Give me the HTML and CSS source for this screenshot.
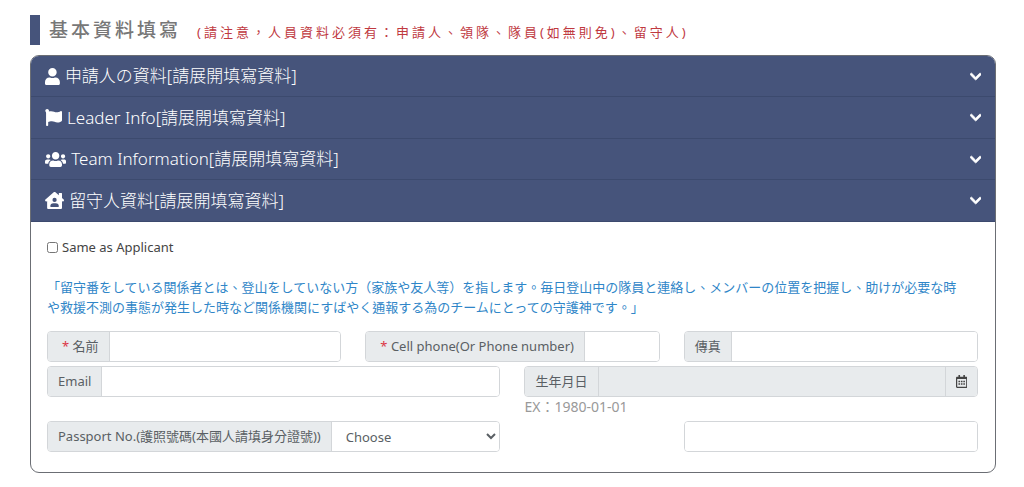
FILE: index.html
```html
<!DOCTYPE html>
<html lang="zh-Hant">

<head>
    <meta charset="UTF-8">
    <meta name="viewport" content="width=device-width, initial-scale=1.0">
    <title>基本資料填寫</title>
    <link rel="stylesheet" href="styles.css">
</head>

<body>
    <div class="title">
        <h1>基本資料填寫</h1>
        <span class="notice">(請注意，人員資料必須有：申請人、領隊、隊員(如無則免)、留守人)</span>
    </div>

    <div class="card">
        <button type="button" class="card-header">
            <svg class="icon" viewBox="0 0 448 512"><path d="M224 256c70.7 0 128-57.3 128-128S294.7 0 224 0 96 57.3 96 128s57.3 128 128 128zm89.6 32h-16.7c-22.2 10.2-46.9 16-72.9 16s-50.6-5.8-72.9-16h-16.7C60.2 288 0 348.2 0 422.4V464c0 26.5 21.5 48 48 48h352c26.5 0 48-21.5 48-48v-41.6c0-74.2-60.2-134.4-134.4-134.4z"/></svg>
            <span>申請人の資料[請展開填寫資料]</span>
            <svg class="arrow" viewBox="0 0 448 512"><path d="M207.029 381.476L12.686 187.132c-9.373-9.373-9.373-24.569 0-33.941l22.667-22.667c9.357-9.357 24.522-9.375 33.901-.04L224 284.505l154.745-154.021c9.379-9.335 24.544-9.317 33.901.04l22.667 22.667c9.373 9.373 9.373 24.569 0 33.941L240.971 381.476c-9.373 9.372-24.569 9.372-33.942 0z"/></svg>
        </button>
        <button type="button" class="card-header">
            <svg class="icon" viewBox="0 0 512 512"><path d="M349.565 98.783C295.978 98.783 251.721 64 184.348 64c-24.955 0-47.309 4.384-68.045 12.013a55.947 55.947 0 0 0 3.586-23.562C118.117 24.015 94.806 1.206 66.338.048 34.345-1.254 8 24.296 8 56c0 19.026 9.497 35.825 24 45.945V488c0 13.255 10.745 24 24 24h16c13.255 0 24-10.745 24-24v-94.4c28.311-12.064 63.582-22.122 114.435-22.122 53.588 0 97.844 34.783 165.217 34.783 48.169 0 86.667-16.294 122.505-40.858C506.84 359.452 512 349.571 512 339.045v-243.1c0-23.393-24.269-38.87-45.485-29.016-34.338 15.948-76.454 31.854-116.95 31.854z"/></svg>
            <span>Leader Info[請展開填寫資料]</span>
            <svg class="arrow" viewBox="0 0 448 512"><path d="M207.029 381.476L12.686 187.132c-9.373-9.373-9.373-24.569 0-33.941l22.667-22.667c9.357-9.357 24.522-9.375 33.901-.04L224 284.505l154.745-154.021c9.379-9.335 24.544-9.317 33.901.04l22.667 22.667c9.373 9.373 9.373 24.569 0 33.941L240.971 381.476c-9.373 9.372-24.569 9.372-33.942 0z"/></svg>
        </button>
        <button type="button" class="card-header">
            <svg class="icon" viewBox="0 0 640 512"><path d="M96 224c35.3 0 64-28.7 64-64s-28.7-64-64-64-64 28.7-64 64 28.7 64 64 64zm448 0c35.3 0 64-28.7 64-64s-28.7-64-64-64-64 28.7-64 64 28.7 64 64 64zm32 32h-64c-17.6 0-33.5 7.1-45.1 18.6 40.3 22.1 68.9 62 75.1 109.4h66c17.7 0 32-14.3 32-32v-32c0-35.3-28.7-64-64-64zm-256 0c61.9 0 112-50.1 112-112S381.9 32 320 32 208 82.1 208 144s50.1 112 112 112zm76.8 32h-8.3c-20.8 10-43.9 16-68.5 16s-47.6-6-68.5-16h-8.3C179.6 288 128 339.6 128 403.2V432c0 26.5 21.5 48 48 48h288c26.5 0 48-21.5 48-48v-28.8c0-63.6-51.6-115.2-115.2-115.2zm-223.7-13.4C161.5 263.1 145.6 256 128 256H64c-35.3 0-64 28.7-64 64v32c0 17.7 14.3 32 32 32h65.9c6.3-47.4 34.9-87.3 75.2-109.4z"/></svg>
            <span>Team Information[請展開填寫資料]</span>
            <svg class="arrow" viewBox="0 0 448 512"><path d="M207.029 381.476L12.686 187.132c-9.373-9.373-9.373-24.569 0-33.941l22.667-22.667c9.357-9.357 24.522-9.375 33.901-.04L224 284.505l154.745-154.021c9.379-9.335 24.544-9.317 33.901.04l22.667 22.667c9.373 9.373 9.373 24.569 0 33.941L240.971 381.476c-9.373 9.372-24.569 9.372-33.942 0z"/></svg>
        </button>
        <button type="button" class="card-header">
            <svg class="icon" viewBox="0 0 576 512"><path d="M570.69,236.27,512,184.44V48a16,16,0,0,0-16-16H432a16,16,0,0,0-16,16V99.67L314.78,10.3C308.5,4.61,296.53,0,288,0s-20.46,4.61-26.74,10.3l-256,226A18.27,18.27,0,0,0,0,248.2a18.64,18.64,0,0,0,4.09,10.71L25.5,282.7a21.14,21.14,0,0,0,12,5.3,21.67,21.67,0,0,0,10.69-4.11l15.9-14V480a32,32,0,0,0,32,32H480a32,32,0,0,0,32-32V269.88l15.91,14A21.94,21.94,0,0,0,538.63,288a20.89,20.89,0,0,0,11.87-5.31l21.41-23.81A21.64,21.64,0,0,0,576,248.19,21,21,0,0,0,570.69,236.27ZM288,176a64,64,0,1,1-64,64A64,64,0,0,1,288,176ZM400,448H176a16,16,0,0,1-16-16,96,96,0,0,1,96-96h64a96,96,0,0,1,96,96A16,16,0,0,1,400,448Z"/></svg>
            <span>留守人資料[請展開填寫資料]</span>
            <svg class="arrow" viewBox="0 0 448 512"><path d="M207.029 381.476L12.686 187.132c-9.373-9.373-9.373-24.569 0-33.941l22.667-22.667c9.357-9.357 24.522-9.375 33.901-.04L224 284.505l154.745-154.021c9.379-9.335 24.544-9.317 33.901.04l22.667 22.667c9.373 9.373 9.373 24.569 0 33.941L240.971 381.476c-9.373 9.372-24.569 9.372-33.942 0z"/></svg>
        </button>

        <form class="card-body">
            <div class="check">
                <input type="checkbox" id="same">
                <label for="same">Same as Applicant</label>
            </div>

            <p class="info">「留守番をしている関係者とは、登山をしていない方（家族や友人等）を指します。毎日登山中の隊員と連絡し、メンバーの位置を把握し、助けが必要な時や救援不測の事態が発生した時など関係機関にすばやく通報する為のチームにとっての守護神です。」</p>

            <div class="row">
                <div class="input-group col-4">
                    <label for="name"><span class="required">*</span> 名前</label>
                    <input type="text" id="name">
                </div>
                <div class="input-group col-4">
                    <label for="phone"><span class="required">*</span> Cell phone(Or Phone number)</label>
                    <input type="text" id="phone">
                </div>
                <div class="input-group col-4">
                    <label for="fax">傳真</label>
                    <input type="text" id="fax">
                </div>

                <div class="input-group col-6">
                    <label for="email">Email</label>
                    <input type="text" id="email">
                </div>
                <div class="col-6">
                    <div class="input-group">
                        <label for="birthday">生年月日</label>
                        <input type="text" id="birthday" readonly>
                        <button type="button" class="btn-date" aria-label="生年月日">
                            <svg viewBox="0 0 448 512"><path d="M148 288h-40c-6.6 0-12-5.4-12-12v-40c0-6.6 5.4-12 12-12h40c6.6 0 12 5.4 12 12v40c0 6.6-5.4 12-12 12zm108-12v-40c0-6.6-5.4-12-12-12h-40c-6.6 0-12 5.4-12 12v40c0 6.6 5.4 12 12 12h40c6.6 0 12-5.4 12-12zm96 0v-40c0-6.6-5.4-12-12-12h-40c-6.6 0-12 5.4-12 12v40c0 6.6 5.4 12 12 12h40c6.6 0 12-5.4 12-12zm-96 96v-40c0-6.6-5.4-12-12-12h-40c-6.6 0-12 5.4-12 12v40c0 6.6 5.4 12 12 12h40c6.6 0 12-5.4 12-12zm-96 0v-40c0-6.6-5.4-12-12-12h-40c-6.6 0-12 5.4-12 12v40c0 6.6 5.4 12 12 12h40c6.6 0 12-5.4 12-12zm192 0v-40c0-6.6-5.4-12-12-12h-40c-6.6 0-12 5.4-12 12v40c0 6.6 5.4 12 12 12h40c6.6 0 12-5.4 12-12zm96-260v352c0 26.5-21.5 48-48 48H48c-26.5 0-48-21.5-48-48V112c0-26.5 21.5-48 48-48h48V12c0-6.6 5.4-12 12-12h40c6.6 0 12 5.4 12 12v52h128V12c0-6.6 5.4-12 12-12h40c6.6 0 12 5.4 12 12v52h48c26.5 0 48 21.5 48 48zm-48 346V160H48v298c0 3.3 2.7 6 6 6h340c3.3 0 6-2.7 6-6z"/></svg>
                        </button>
                    </div>
                    <div class="hint">EX：1980-01-01</div>
                </div>

                <div class="input-group col-6">
                    <label for="id-type">Passport No.(護照號碼(本國人請填身分證號))</label>
                    <select id="id-type">
                        <option>Choose</option>
                    </select>
                </div>
                <div class="input-group col-last">
                    <input type="text" id="id-number" aria-label="護照號碼">
                </div>
            </div>
        </form>
    </div>
</body>

</html>
```
FILE: styles.css
```css
* {
    box-sizing: border-box;
}

body {
    margin: 0;
    padding: 15px 28px 14px 30px;
    background-color: #fff;
    color: #444;
    font-family: "Noto Sans", "Noto Sans CJK TC", sans-serif;
    font-size: 13px;
    line-height: 20px;
}

input,
select,
button {
    margin: 0;
    font: inherit;
}

/* title */
.title {
    display: flex;
    align-items: baseline;
    gap: 16px;
    height: 30px;
    margin-bottom: 10px;
    padding-left: 9px;
    border-left: 10px solid #46547b;
    letter-spacing: 3px;
    line-height: 30px;
}

.title h1 {
    margin: 0;
    color: #777;
    font-size: 19px;
    font-weight: 500;
}

.notice {
    color: #c0393f;
}

/* accordion */
.card {
    overflow: hidden;
    border: 1px solid #6b6e74;
    border-radius: 9px;
}

.card-header {
    display: flex;
    align-items: center;
    gap: 5px;
    width: 100%;
    height: 41px;
    padding: 0 14px;
    border: none;
    border-bottom: 1px solid #3c4a6e;
    background-color: #46547b;
    color: #fff;
    font-size: 17px;
    font-weight: 300;
    text-align: left;
}

.card-header:nth-child(even) {
    height: 42px;
}

.card-header svg {
    fill: #fff;
}

.icon {
    height: 17px;
}

.arrow {
    height: 13px;
    margin-left: auto;
    stroke: #fff;
    stroke-width: 30;
}

.card-body {
    padding: 15px 17px 20px 16px;
}

.check {
    display: flex;
    align-items: center;
    gap: 4px;
}

.check input {
    width: 11px;
    height: 11px;
}

.info {
    margin: 20px 16px 14px 0;
    color: #2f86c8;
}

/* form */
.row {
    display: grid;
    grid-template-columns: repeat(12, 1fr);
    gap: 4px 24px;
}

.col-4 {
    grid-column: span 4;
}

.col-6 {
    grid-column: span 6;
}

.col-last {
    grid-column: 9 / span 4;
}

.input-group {
    display: flex;
    height: 31px;
    overflow: hidden;
    border: 1px solid #d3d6d9;
    border-radius: 4px;
}

.input-group label {
    flex: none;
    padding: 0 10px;
    border-right: 1px solid #d3d6d9;
    background-color: #e8ebed;
    color: #5a5f64;
    line-height: 29px;
}

.input-group label:has(.required) {
    padding-left: 14px;
}

.input-group input,
.input-group select {
    flex: 1;
    min-width: 0;
    padding: 0 10px;
    border: none;
    background-color: #fff;
    color: #5a5f64;
}

.input-group select {
    padding: 0 0 0 10px;
}

.input-group input[readonly] {
    background-color: #e8ebed;
}

.required {
    color: #dc3545;
}

.btn-date {
    display: flex;
    align-items: center;
    padding: 0 10px;
    border: none;
    border-left: 1px solid #d3d6d9;
    background-color: #e8ebed;
}

.btn-date svg {
    height: 13px;
    fill: #444;
}

.hint {
    color: #999;
    font-size: 14px;
}
```
